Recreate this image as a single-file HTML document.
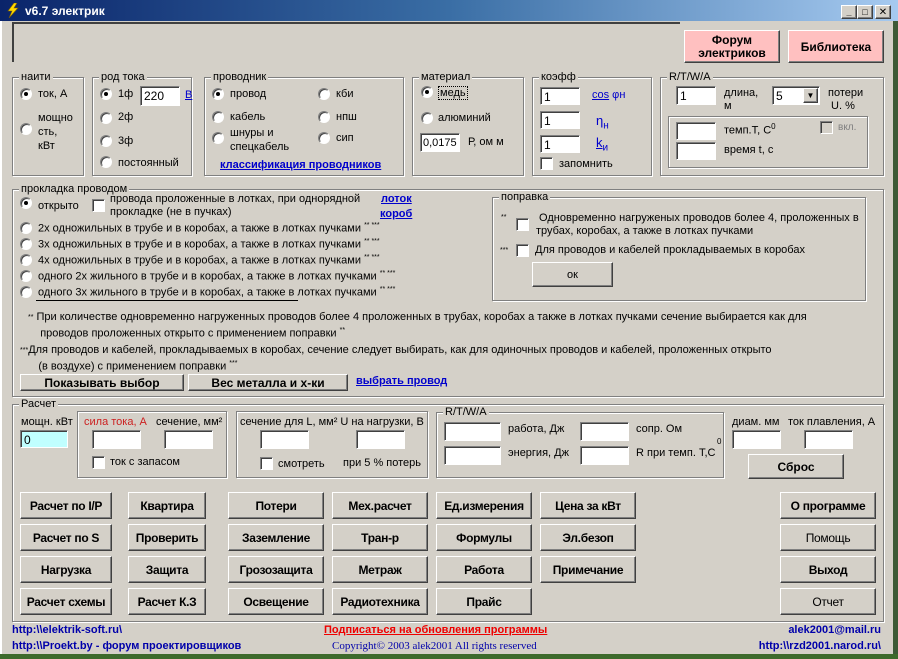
<!DOCTYPE html>
<html><head><meta charset="utf-8">
<style>
*{box-sizing:border-box;margin:0;padding:0}
body{width:898px;height:659px;overflow:hidden;background:#d4d0c8;font-family:"Liberation Sans","DejaVu Sans",sans-serif;font-size:11px;color:#000;position:relative}
.a{position:absolute;white-space:nowrap}
.g{position:absolute;border:1px solid #808080;box-shadow:1px 1px 0 #fff, inset 1px 1px 0 #fff}
.lg{position:absolute;top:-7px;left:6px;background:#d4d0c8;padding:0 2px;line-height:12px}
.in{position:absolute;background:#fff;border:1px solid;border-color:#808080 #fff #fff #808080;box-shadow:inset 1px 1px 0 #404040;font-size:12px;padding:2px 3px;line-height:14px}
.r{position:absolute;width:12px;height:12px;border-radius:50%;background:#fff;border:1px solid;border-color:#808080 #fff #fff #808080;box-shadow:inset 1px 1px 0 #404040}
.r.on::after{content:"";position:absolute;left:3px;top:3px;width:4px;height:4px;border-radius:50%;background:#000}
.c{position:absolute;width:13px;height:13px;background:#fff;border:1px solid;border-color:#808080 #fff #fff #808080;box-shadow:inset 1px 1px 0 #404040}
.b{position:absolute;background:#d4d0c8;border:1px solid;border-color:#fff #404040 #404040 #fff;box-shadow:inset -1px -1px 0 #808080;display:flex;align-items:center;justify-content:center;text-align:center;font-weight:bold;font-size:12px}
.bn{font-family:"Liberation Sans Narrow","Liberation Sans",sans-serif;font-size:12px;font-weight:bold;letter-spacing:-0.3px}
.lnk{color:#0000cc;text-decoration:underline;font-weight:bold}
.blu{color:#0000cc}
</style></head><body>
<div class="a" style="left:0;top:0;width:898px;height:21px;background:linear-gradient(90deg,#0a246a,#3a6ea5 50%,#a6caf0)"></div>
<svg class="a" style="left:5px;top:3px" width="16" height="15" viewBox="0 0 16 15"><path d="M9 0 L3 8 L7 8 L4 15 L13 5 L9 5 L12 0Z" fill="#ffd800" stroke="#806000" stroke-width=".6"/></svg>
<div class="a" style="left:25px;top:4px;color:#fff;font-weight:bold;font-size:12px">v6.7 электрик</div>
<div class="b" style="left:841px;top:5px;width:16px;height:14px;font-size:9px;font-weight:bold">_</div>
<div class="b" style="left:857px;top:5px;width:16px;height:14px;font-size:9px">□</div>
<div class="b" style="left:875px;top:5px;width:16px;height:14px;font-size:10px">✕</div>
<div class="a" style="left:893px;top:21px;width:5px;height:638px;background:#3d5a36"></div>
<div class="a" style="left:0;top:654px;width:898px;height:5px;background:#3d6a2c"></div>
<div class="a" style="left:0;top:21px;width:2px;height:633px;background:#fff"></div>

<div class="a" style="left:12px;top:22px;width:668px;height:40px;border-top:2px solid #404040;border-left:2px solid #404040"></div>
<div class="b" style="left:684px;top:30px;width:96px;height:33px;background:#ffc0c0;font-size:12px;line-height:13px">Форум<br>электриков</div>
<div class="b" style="left:788px;top:30px;width:96px;height:33px;background:#ffc0c0">Библиотека</div>

<div class="g" style="left:12px;top:77px;width:72px;height:99px"><span class="lg">наити</span></div>
<div class="r on" style="left:20px;top:88px"></div><div class="a" style="left:38px;top:88px">ток, А</div>
<div class="r" style="left:20px;top:123px"></div><div class="a" style="left:38px;top:111px;line-height:14px">мощно<br>сть,<br>кВт</div>

<div class="g" style="left:92px;top:77px;width:100px;height:99px"><span class="lg">род тока</span></div>
<div class="r on" style="left:100px;top:88px"></div><div class="a" style="left:118px;top:88px">1ф</div>
<div class="in" style="left:140px;top:86px;width:40px;height:20px">220</div>
<div class="a blu" style="left:185px;top:89px;text-decoration:underline">В</div>
<div class="r" style="left:100px;top:112px"></div><div class="a" style="left:118px;top:111px">2ф</div>
<div class="r" style="left:100px;top:135px"></div><div class="a" style="left:118px;top:135px">3ф</div>
<div class="r" style="left:100px;top:156px"></div><div class="a" style="left:118px;top:157px">постоянный</div>

<div class="g" style="left:204px;top:77px;width:200px;height:99px"><span class="lg">проводник</span></div>
<div class="r on" style="left:212px;top:88px"></div><div class="a" style="left:230px;top:88px">провод</div>
<div class="r" style="left:318px;top:88px;"></div><div class="a" style="left:336px;top:88px">кби</div>
<div class="r" style="left:212px;top:111px"></div><div class="a" style="left:230px;top:111px">кабель</div>
<div class="r" style="left:318px;top:111px"></div><div class="a" style="left:336px;top:111px">нпш</div>
<div class="r" style="left:212px;top:132px"></div><div class="a" style="left:230px;top:126px;line-height:14px">шнуры и<br>спецкабель</div>
<div class="r" style="left:318px;top:132px"></div><div class="a" style="left:336px;top:132px">сип</div>
<div class="a lnk" style="left:220px;top:159px">классификация проводников</div>

<div class="g" style="left:412px;top:77px;width:112px;height:99px"><span class="lg">материал</span></div>
<div class="r on" style="left:421px;top:86px"></div><div class="a" style="left:438px;top:86px;border:1px dotted #000;padding:0 1px">медь</div>
<div class="r" style="left:421px;top:112px"></div><div class="a" style="left:438px;top:112px">алюминий</div>
<div class="in" style="left:420px;top:133px;width:40px;height:19px;font-size:11px;padding:2px">0,0175</div>
<div class="a" style="left:468px;top:136px">Р, ом м</div>

<div class="g" style="left:532px;top:77px;width:120px;height:99px"><span class="lg">коэфф</span></div>
<div class="in" style="left:540px;top:87px;width:40px;height:18px">1</div>
<div class="a blu" style="left:592px;top:89px"><u>cos</u> φн</div>
<div class="in" style="left:540px;top:111px;width:40px;height:18px">1</div>
<div class="a blu" style="left:596px;top:113px;font-size:13px">η<sub style="font-size:10px">н</sub></div>
<div class="in" style="left:540px;top:135px;width:40px;height:18px">1</div>
<div class="a blu" style="left:596px;top:135px;font-size:13px"><u>k</u><sub style="font-size:10px">и</sub></div>
<div class="c" style="left:540px;top:157px"></div><div class="a" style="left:559px;top:158px">запомнить</div>

<div class="g" style="left:660px;top:77px;width:224px;height:99px"><span class="lg">R/T/W/A</span></div>
<div class="in" style="left:676px;top:86px;width:40px;height:19px">1</div>
<div class="a" style="left:724px;top:87px;line-height:13px">длина,<br>м</div>
<div class="in" style="left:772px;top:86px;width:48px;height:19px">5</div>
<div class="b" style="left:803px;top:88px;width:15px;height:15px;font-size:8px">▼</div>
<div class="a" style="left:828px;top:87px;line-height:13px">потери<br>&nbsp;U. %</div>
<div class="g" style="left:668px;top:116px;width:200px;height:52px"></div>
<div class="in" style="left:676px;top:122px;width:40px;height:18px"></div>
<div class="a" style="left:724px;top:122px">темп.Т, С<sup style="font-size:8px">0</sup></div>
<div class="c" style="left:820px;top:121px;background:#d4d0c8"></div><div class="a" style="left:838px;top:122px;color:#808080;font-size:10px">вкл.</div>
<div class="in" style="left:676px;top:142px;width:40px;height:18px"></div>
<div class="a" style="left:724px;top:144px">время t, с</div>

<div class="g" style="left:12px;top:189px;width:872px;height:208px"><span class="lg">прокладка проводом</span></div>
<div class="r on" style="left:20px;top:197px"></div><div class="a" style="left:38px;top:200px">открыто</div>
<div class="c" style="left:92px;top:199px"></div>
<div class="a" style="left:110px;top:193px;line-height:13px">провода проложенные в лотках, при однорядной<br>прокладке (не в пучках)</div>
<div class="a lnk" style="left:381px;top:193px">лоток</div>
<div class="a lnk" style="left:380px;top:208px">короб</div>
<div class="r" style="left:20px;top:222px"></div><div class="a" style="left:38px;top:222px">2х одножильных в трубе и в коробах, а также в лотках пучками <sup style="font-size:7px">** ***</sup></div>
<div class="r" style="left:20px;top:238px"></div><div class="a" style="left:38px;top:238px">3х одножильных в трубе и в коробах, а также в лотках пучками <sup style="font-size:7px">** ***</sup></div>
<div class="r" style="left:20px;top:254px"></div><div class="a" style="left:38px;top:254px">4х одножильных в трубе и в коробах, а также в лотках пучками <sup style="font-size:7px">** ***</sup></div>
<div class="r" style="left:20px;top:270px"></div><div class="a" style="left:38px;top:270px">одного 2х жильного в трубе и в коробах, а также в лотках пучками <sup style="font-size:7px">** ***</sup></div>
<div class="r" style="left:20px;top:286px"></div><div class="a" style="left:38px;top:286px">одного 3х жильного в трубе и в коробах, а также в лотках пучками <sup style="font-size:7px">** ***</sup></div>
<div class="a" style="left:36px;top:300px;width:262px;height:1px;background:#000"></div>

<div class="g" style="left:492px;top:197px;width:374px;height:104px"><span class="lg">поправка</span></div>
<div class="a" style="left:501px;top:214px;font-size:7px">**</div>
<div class="c" style="left:516px;top:218px"></div>
<div class="a" style="left:536px;top:212px;line-height:13px">&nbsp;Одновременно нагруженых проводов более 4, проложенных в<br>трубах, коробах, а также в лотках пучками</div>
<div class="a" style="left:500px;top:247px;font-size:7px">***</div>
<div class="c" style="left:516px;top:244px"></div>
<div class="a" style="left:535px;top:244px">Для проводов и кабелей прокладываемых в коробах</div>
<div class="b" style="left:532px;top:262px;width:81px;height:25px;font-weight:normal;font-size:11px">ок</div>

<div class="a" style="left:28px;top:311px;line-height:13px"><span style="font-size:7px;vertical-align:top">**</span> При количестве одновременно нагруженных проводов более 4 проложенных в трубах, коробах а также в лотках пучками сечение выбирается как для<br>&nbsp;&nbsp;&nbsp;&nbsp;проводов проложенных открыто с применением поправки <sup style="font-size:7px">**</sup></div>
<div class="a" style="left:20px;top:344px;line-height:13px"><span style="font-size:7px;vertical-align:top">***</span>Для проводов и кабелей, прокладываемых в коробах, сечение следует выбирать, как для одиночных проводов и кабелей, проложенных открыто<br>&nbsp;&nbsp;&nbsp;&nbsp;&nbsp;&nbsp;(в воздухе) с применением поправки <sup style="font-size:7px">***</sup></div>
<div class="b" style="left:20px;top:374px;width:164px;height:17px">Показывать выбор</div>
<div class="b" style="left:188px;top:374px;width:160px;height:17px">Вес металла и х-ки</div>
<div class="a lnk" style="left:356px;top:375px">выбрать провод</div>

<div class="g" style="left:12px;top:404px;width:872px;height:218px"><span class="lg">Расчет</span></div>
<div class="a" style="left:21px;top:416px">мощн. кВт</div>
<div class="in" style="left:20px;top:430px;width:48px;height:18px;background:#c0ffff">0</div>
<div class="g" style="left:77px;top:411px;width:150px;height:67px"></div>
<div class="a" style="left:84px;top:416px;color:#cc2020">сила тока, А</div>
<div class="a" style="left:156px;top:416px">сечение, мм²</div>
<div class="in" style="left:92px;top:430px;width:49px;height:19px"></div>
<div class="in" style="left:164px;top:430px;width:49px;height:19px"></div>
<div class="c" style="left:92px;top:456px"></div><div class="a" style="left:110px;top:456px">ток с запасом</div>
<div class="g" style="left:236px;top:411px;width:192px;height:67px"></div>
<div class="a" style="left:240px;top:416px">сечение для L, мм² U на нагрузки, В</div>
<div class="in" style="left:260px;top:430px;width:49px;height:19px"></div>
<div class="in" style="left:356px;top:430px;width:49px;height:19px"></div>
<div class="c" style="left:260px;top:457px"></div><div class="a" style="left:278px;top:458px">смотреть</div>
<div class="a" style="left:343px;top:457px">при 5 % потерь</div>
<div class="g" style="left:436px;top:412px;width:288px;height:66px"><span class="lg">R/T/W/A</span></div>
<div class="in" style="left:444px;top:422px;width:57px;height:19px"></div>
<div class="a" style="left:508px;top:423px">работа, Дж</div>
<div class="in" style="left:580px;top:422px;width:49px;height:19px"></div>
<div class="a" style="left:636px;top:423px">сопр. Ом</div>
<div class="in" style="left:444px;top:446px;width:57px;height:19px"></div>
<div class="a" style="left:508px;top:447px">энергия, Дж</div>
<div class="in" style="left:580px;top:446px;width:49px;height:19px"></div>
<div class="a" style="left:636px;top:447px">R при темп. Т,С</div>
<div class="a" style="left:717px;top:437px;font-size:8px">0</div>
<div class="a" style="left:732px;top:416px">диам. мм</div>
<div class="a" style="left:788px;top:416px">ток плавления, А</div>
<div class="in" style="left:732px;top:430px;width:49px;height:19px"></div>
<div class="in" style="left:804px;top:430px;width:49px;height:19px"></div>
<div class="b" style="left:748px;top:454px;width:96px;height:25px">Сброс</div>

<div class="b bn" style="left:20px;top:492px;width:92px;height:27px">Расчет по I/P</div>
<div class="b bn" style="left:128px;top:492px;width:78px;height:27px">Квартира</div>
<div class="b bn" style="left:228px;top:492px;width:96px;height:27px">Потери</div>
<div class="b bn" style="left:332px;top:492px;width:96px;height:27px">Мех.расчет</div>
<div class="b bn" style="left:436px;top:492px;width:96px;height:27px">Ед.измерения</div>
<div class="b bn" style="left:540px;top:492px;width:96px;height:27px">Цена за кВт</div>
<div class="b bn" style="left:780px;top:492px;width:96px;height:27px">О программе</div>

<div class="b bn" style="left:20px;top:524px;width:92px;height:27px">Расчет по S</div>
<div class="b bn" style="left:128px;top:524px;width:78px;height:27px">Проверить</div>
<div class="b bn" style="left:228px;top:524px;width:96px;height:27px">Заземление</div>
<div class="b bn" style="left:332px;top:524px;width:96px;height:27px">Тран-р</div>
<div class="b bn" style="left:436px;top:524px;width:96px;height:27px">Формулы</div>
<div class="b bn" style="left:540px;top:524px;width:96px;height:27px">Эл.безоп</div>
<div class="b bn" style="left:780px;top:524px;width:96px;height:27px;font-weight:normal">Помощь</div>

<div class="b bn" style="left:20px;top:556px;width:92px;height:27px">Нагрузка</div>
<div class="b bn" style="left:128px;top:556px;width:78px;height:27px">Защита</div>
<div class="b bn" style="left:228px;top:556px;width:96px;height:27px">Грозозащита</div>
<div class="b bn" style="left:332px;top:556px;width:96px;height:27px">Метраж</div>
<div class="b bn" style="left:436px;top:556px;width:96px;height:27px">Работа</div>
<div class="b bn" style="left:540px;top:556px;width:96px;height:27px">Примечание</div>
<div class="b bn" style="left:780px;top:556px;width:96px;height:27px">Выход</div>

<div class="b bn" style="left:20px;top:588px;width:92px;height:27px">Расчет схемы</div>
<div class="b bn" style="left:128px;top:588px;width:78px;height:27px">Расчет К.З</div>
<div class="b bn" style="left:228px;top:588px;width:96px;height:27px">Освещение</div>
<div class="b bn" style="left:332px;top:588px;width:96px;height:27px">Радиотехника</div>
<div class="b bn" style="left:436px;top:588px;width:96px;height:27px">Прайс</div>
<div class="b bn" style="left:780px;top:588px;width:96px;height:27px;font-weight:normal">Отчет</div>

<div class="a" style="left:12px;top:624px;color:#0000aa;font-weight:bold;font-size:11px">http:\\elektrik-soft.ru\</div>
<div class="a" style="left:12px;top:640px;color:#0000aa;font-weight:bold;font-size:11px">http:\\Proekt.by - форум проектировщиков</div>
<div class="a" style="left:324px;top:624px;color:#ee0000;font-weight:bold;text-decoration:underline;font-size:11px">Подписаться на обновления программы</div>
<div class="a" style="left:332px;top:640px;color:#0000aa;font-family:'Liberation Serif',serif;font-size:11px">Copyright© 2003 alek2001 All rights reserved</div>
<div class="a" style="right:17px;top:624px;color:#0000aa;font-weight:bold;font-size:11px">alek2001@mail.ru</div>
<div class="a" style="right:17px;top:640px;color:#0000aa;font-weight:bold;font-size:11px">http:\\rzd2001.narod.ru\</div>
</body></html>
